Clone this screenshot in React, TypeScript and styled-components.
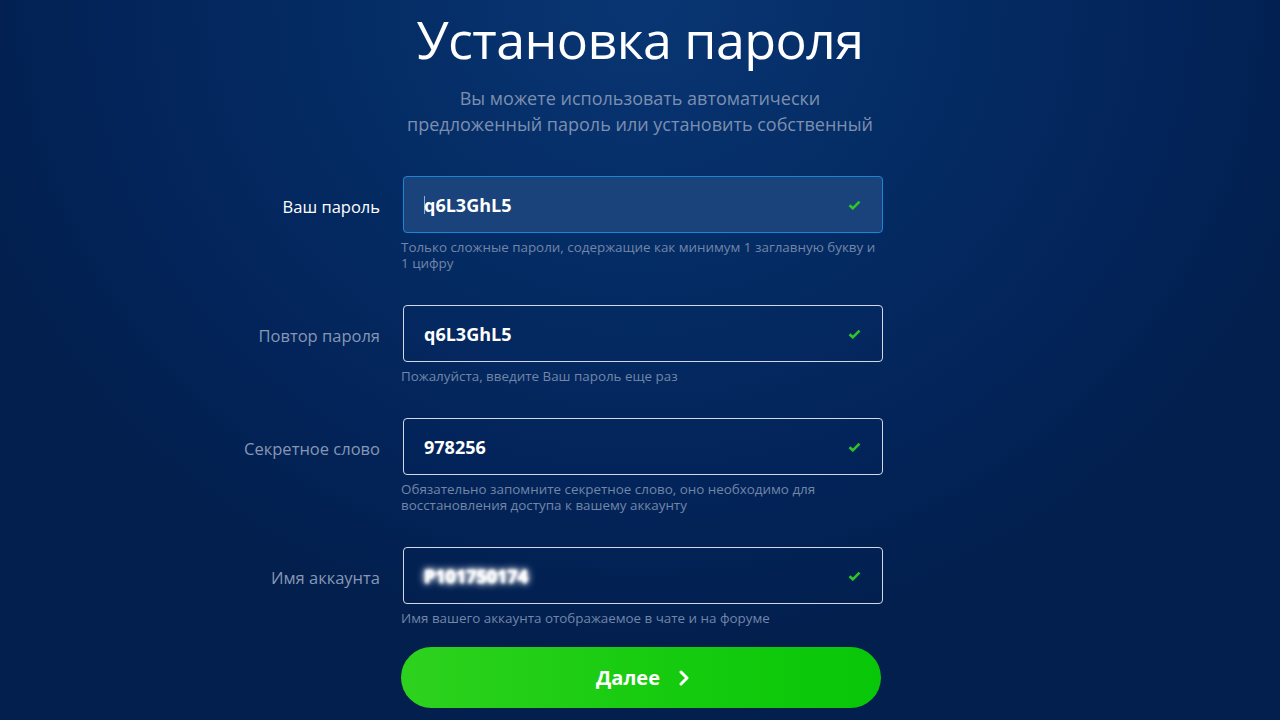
import React from 'react';
import styled, { createGlobalStyle } from 'styled-components';

const GlobalStyle = createGlobalStyle`
  html, body {
    margin: 0;
    padding: 0;
    height: 100%;
  }
  body {
    font-family: 'Open Sans', 'Noto Sans', sans-serif;
    background: #03245a;
  }
`;

interface IField {
  label: string;
  value: string;
  hint: string[];
  active?: boolean;
  blurred?: boolean;
}

const fields: IField[] = [
  {
    label: 'Ваш пароль',
    value: 'q6L3GhL5',
    hint: ['Только сложные пароли, содержащие как минимум 1 заглавную букву и', '1 цифру'],
    active: true,
  },
  {
    label: 'Повтор пароля',
    value: 'q6L3GhL5',
    hint: ['Пожалуйста, введите Ваш пароль еще раз'],
  },
  {
    label: 'Секретное слово',
    value: '978256',
    hint: ['Обязательно запомните секретное слово, оно необходимо для', 'восстановления доступа к вашему аккаунту'],
  },
  {
    label: 'Имя аккаунта',
    value: 'P101750174',
    hint: ['Имя вашего аккаунта отображаемое в чате и на форуме'],
    blurred: true,
  },
];

//small green tick at the right of every valid input
const Check = () => (
  <svg width='13' height='10' viewBox='0 0 13 10'>
    <path d='M1.5 5.2 L4.8 8.3 L11.5 1.6' fill='none' stroke='#2fc42a' strokeWidth='2.6' />
  </svg>
);

const Chevron = () => (
  <svg width='12' height='16' viewBox='0 0 12 16'>
    <path d='M3 2 L9 8 L3 14' fill='none' stroke='#fff' strokeWidth='3' strokeLinecap='round' strokeLinejoin='round' />
  </svg>
);

const App: React.FC = () => {
  return (
    <Page>
      <GlobalStyle />
      <Title>Установка пароля</Title>
      <Subtitle>
        Вы можете использовать автоматически
        <br />
        предложенный пароль или установить собственный
      </Subtitle>
      <Form>
        {fields.map((f) => (
          <Field key={f.label}>
            <Label $active={f.active}>{f.label}</Label>
            <InputBox $active={f.active}>
              {f.active && <Caret />}
              <Value $blurred={f.blurred}>{f.value}</Value>
              <Check />
            </InputBox>
            <Hint>
              {f.hint.map((line) => (
                <div key={line}>{line}</div>
              ))}
            </Hint>
          </Field>
        ))}
        <ButtonRow>
          <NextButton>
            Далее
            <Chevron />
          </NextButton>
        </ButtonRow>
      </Form>
    </Page>
  );
};

export default App;

const Page = styled.div`
  width: 1280px;
  height: 720px;
  overflow: hidden;
  box-sizing: border-box;
  padding-top: 4px;
  background: radial-gradient(ellipse 55% 90% at 50% 0%, #093673 0%, #042b63 45%, #03245a 75%, #021f4e 100%);
  display: flex;
  flex-direction: column;
  align-items: center;
`;

const Title = styled.h1`
  margin: 0;
  font-family: 'Open Sans', sans-serif;
  font-weight: 400;
  font-size: 52px;
  line-height: 70px;
  color: #fff;
  letter-spacing: -0.6px;
`;

const Subtitle = styled.p`
  margin: 11px 0 0;
  text-align: center;
  font-size: 18px;
  line-height: 26px;
  color: #7d8fb0;
`;

const Form = styled.div`
  margin-top: 39px;
  width: 100%;
  display: flex;
  flex-direction: column;
  gap: 34px;
`;

const Field = styled.div`
  display: grid;
  grid-template-columns: 1fr 480px 1fr;
  grid-template-rows: 57px auto;
  column-gap: 23px;
  padding-left: 6px;
`;

const Label = styled.div<{ $active?: boolean }>`
  grid-column: 1;
  grid-row: 1;
  justify-self: end;
  align-self: center;
  margin-top: 3px;
  font-size: 16.5px;
  color: ${(p) => (p.$active ? '#ffffff' : '#8797b3')};
`;

const InputBox = styled.div<{ $active?: boolean }>`
  grid-column: 2;
  grid-row: 1;
  box-sizing: border-box;
  display: flex;
  align-items: center;
  padding: 0 21px 0 20px;
  border-radius: 4px;
  border: 1px solid ${(p) => (p.$active ? '#1b86d6' : '#d3d9e4')};
  background: ${(p) => (p.$active ? '#1a437c' : 'transparent')};
`;

const Caret = styled.span`
  width: 1px;
  height: 18px;
  background: #8fb0d8;
  margin-right: -1px;
`;

const Value = styled.span<{ $blurred?: boolean }>`
  flex: 1;
  font-family: 'Open Sans', sans-serif;
  font-weight: 700;
  font-size: 18px;
  color: #fff;
  ${(p) =>
    p.$blurred &&
    `flex: none;
     margin-right: auto;
     filter: blur(1.6px);
     text-shadow: 0 0 3px #fff, 0 0 6px #fff, 0 0 9px #fff, 0 0 2px #fff;`}
`;

const Hint = styled.div`
  grid-column: 2;
  grid-row: 2;
  margin: 6px 0 0 -2px;
  font-size: 13.4px;
  line-height: 16px;
  color: #7286a7;
`;

const ButtonRow = styled.div`
  margin-top: -13px;
  display: grid;
  grid-template-columns: 1fr 480px 1fr;
  column-gap: 23px;
  padding-left: 2px;
`;

const NextButton = styled.button`
  grid-column: 2;
  height: 61px;
  border: none;
  border-radius: 31px;
  background: linear-gradient(90deg, #2ed21e 0%, #18cc10 50%, #08c708 100%);
  color: #fff;
  font-family: 'Open Sans', sans-serif;
  font-weight: 700;
  font-size: 20px;
  display: flex;
  align-items: center;
  justify-content: center;
  gap: 18px;
  padding-left: 10px;
  cursor: pointer;
`;
